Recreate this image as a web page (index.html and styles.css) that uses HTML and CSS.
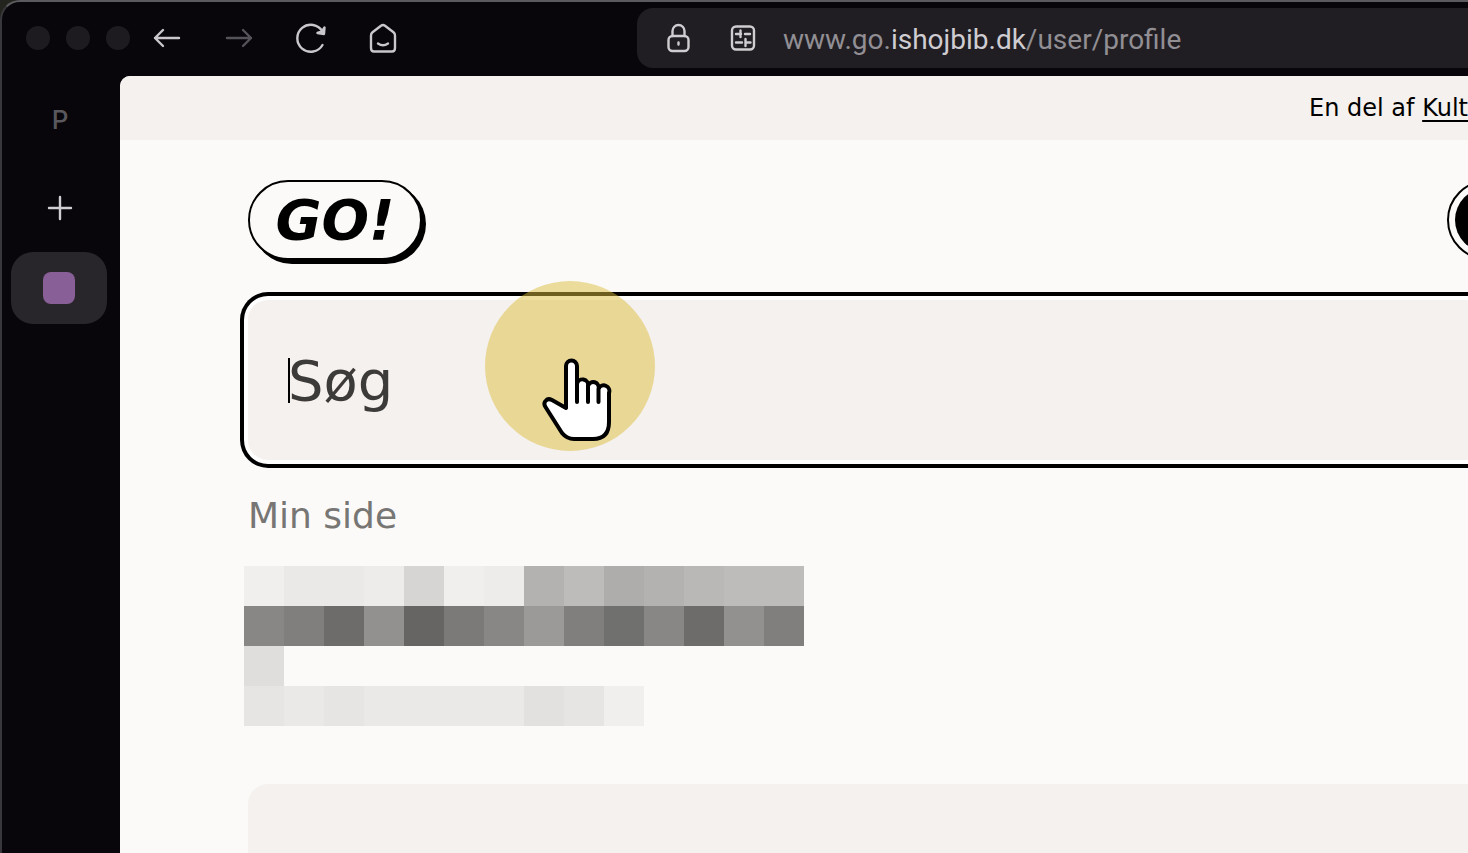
FILE: index.html
```html
<!DOCTYPE html>
<html lang="da">
<head>
<meta charset="utf-8">
<title>Min side</title>
<link rel="stylesheet" href="styles.css">
</head>
<body>
<div class="window">
  <header class="toolbar">
    <div class="lights"><span class="light"></span><span class="light"></span><span class="light"></span></div>
    <nav class="nav" aria-label="Browser">
      <button class="tool" aria-label="Back"><svg width="32" height="32" viewBox="0 0 32 32"><path d="M28 16H4M12 8l-8 8 8 8"/></svg></button>
      <button class="tool dim" aria-label="Forward"><svg width="32" height="32" viewBox="0 0 32 32"><path d="M4 16h24M20 8l8 8-8 8"/></svg></button>
      <button class="tool" aria-label="Reload"><svg width="32" height="32" viewBox="0 0 32 32"><path d="M27.500 23A13.500 13.500 0 1 1 27.500 9.500"/><path fill="currentColor" d="M29.500 5.500L29 12 22.500 11 27 9.500Z"/></svg></button>
      <button class="tool" aria-label="Home"><svg width="32" height="32" viewBox="0 0 32 32"><path d="M4 13.500Q4 11.500 5.500 10.300L14 3.700Q16 2.200 18 3.700L26.500 10.300Q28 11.500 28 13.500V26Q28 29.500 25 29.500H7Q4 29.500 4 26ZM11 21.500Q16 25 21 21.500"/></svg></button>
    </nav>
    <div class="address">
      <svg class="icon" width="32" height="32" viewBox="0 0 32 32"><rect x="5.500" y="14" width="20" height="15" rx="4"/><path d="M9.500 14V9a6 6 0 0 1 12 0v5M15.500 20.500v2"/></svg>
      <svg class="icon" width="32" height="32" viewBox="0 0 32 32"><rect x="5" y="4.500" width="22" height="23" rx="4"/><path d="M9 12h5M13.500 8.500v6.500M18 12h5M9 20.500h6M18.500 17v7M18.500 20.500h5"/></svg>
      <span class="url">www.go.<span class="domain">ishojbib.dk</span>/user/profile</span>
    </div>
  </header>
  <div class="body">
    <aside class="rail">
      <span class="space">P</span>
      <button class="add" aria-label="New tab"><svg width="32" height="32" viewBox="0 0 32 32"><path d="M16 5v22M5 16h22"/></svg></button>
      <button class="tab" aria-label="Current tab"><span class="favicon"></span></button>
    </aside>
    <main class="page">
      <div class="strip"><p class="part">En del af <a class="partner" href="#">Kult</a></p></div>
      <div class="content">
        <div class="masthead">
          <a class="logo" href="#">GO!</a>
          <button class="profile" aria-label="Profil"><span class="disc"></span></button>
        </div>
        <div class="search">
          <input class="field" type="search" placeholder="Søg" aria-label="Søg">
          <span class="caret"></span>
          <span class="halo"></span>
          <svg class="hand" width="72" height="86" viewBox="0 0 72 86"><path d="M25 50V10a5 5 0 0 1 11 0V28a5 5 0 0 1 11 2a5 5 0 0 1 10.500 3a5 5 0 0 1 10.500 4V66Q68 83 52 83H33Q26 83 21 77L4.500 51Q2 47 5 44.500Q7 42 11 44L25 52ZM36 27V46M47 29V46M57.500 33V46"/></svg>
        </div>
        <h1 class="title">Min side</h1>
        <div class="mosaic" aria-hidden="true">
          <i class="s1"></i><i class="s3"></i><i class="s3"></i><i class="s2"></i><i class="s7"></i><i class="s1"></i><i class="s2"></i><i class="s10"></i><i class="s8"></i><i class="s11"></i><i class="s10"></i><i class="s9"></i><i class="s8"></i><i class="s8"></i>
          <i class="s14"></i><i class="s15"></i><i class="s18"></i><i class="s13"></i><i class="s19"></i><i class="s16"></i><i class="s14"></i><i class="s12"></i><i class="s15"></i><i class="s17"></i><i class="s14"></i><i class="s18"></i><i class="s13"></i><i class="s15"></i>
          <i class="s6 lone"></i>
          <i class="s4"></i><i class="s3"></i><i class="s4"></i><i class="s3"></i><i class="s3"></i><i class="s3"></i><i class="s3"></i><i class="s5"></i><i class="s4"></i><i class="s1"></i>
        </div>
        <section class="card"></section>
      </div>
    </main>
  </div>
</div>
</body>
</html>
```
FILE: styles.css
```css
* { box-sizing: border-box; }
html, body { height: 100%; }
body { margin: 0; overflow: hidden; background: #24241e; font-family: "DejaVu Sans", sans-serif; }
button { padding: 0; border: 0; background: none; }
svg { fill: none; stroke-linecap: round; stroke-linejoin: round; }

.window { display: flex; flex-direction: column; height: 100%; border-top: 2px solid #5b5b5f; border-left: 2px solid #38373b; border-top-left-radius: 20px; background: #08050b; overflow: hidden; }
.toolbar { display: flex; align-items: center; height: 74px; flex: none; padding: 0 0 2px 24px; }
.lights { display: flex; gap: 16px; }
.light { width: 24px; height: 24px; border-radius: 50%; background: #1d1b20; }
.nav { display: flex; gap: 40px; margin-left: 21px; }
.tool { width: 32px; height: 32px; color: #c9c7cb; }
.tool svg, .add svg, .icon { display: block; stroke: currentColor; stroke-width: 2.4; }
.dim { color: #55535a; }
.address { display: flex; align-items: center; gap: 32px; flex: 1; height: 60px; margin-left: 238px; padding-left: 26px; border-radius: 16px 0 0 16px; background: #211e23; color: #cfcdd0; white-space: nowrap; }
.icon { flex: none; }
.url { margin-left: -8px; padding-top: 4px; font: 28px/32px Roboto, sans-serif; color: #918f94; }
.domain { color: #cfcdd1; }

.body { display: flex; flex: 1; min-height: 0; }
.rail { display: flex; flex-direction: column; align-items: center; width: 118px; flex: none; padding: 28px 4px 0 0; }
.space { padding-left: 2px; font: 500 26px/32px Inter, sans-serif; color: #5a585d; }
.add { width: 32px; height: 32px; margin: 56px 0 28px 2px; color: #d0ced2; }
.tab { display: grid; place-items: center; width: 96px; height: 72px; border-radius: 22px; background: #29262b; }
.favicon { width: 32px; height: 32px; border-radius: 8px; background: #885f96; }

.page { flex: 1; min-width: 0; overflow: hidden; border-top-left-radius: 10px; background: #fbfaf8; }
.strip { display: flex; justify-content: flex-end; align-items: center; height: 64px; background: #f5f1ee; }
.part { margin: 0; font-size: 24px; line-height: 32px; white-space: nowrap; color: #000; }
.partner { color: inherit; text-decoration: underline; text-decoration-thickness: 2px; text-underline-offset: 4px; }
.content { padding: 40px 0 0 128px; }
.masthead { display: flex; justify-content: space-between; height: 80px; }
.logo { display: grid; place-items: center; width: 174px; height: 80px; border: 2px solid #000; border-radius: 40px; box-shadow: 4px 4px 0 #000; background: #fbfaf8; color: #000; font-size: 56px; font-weight: bold; font-style: italic; line-height: 64px; text-decoration: none; }
.profile { display: grid; place-items: center; flex: none; width: 80px; height: 80px; margin-right: -59px; border: 2px solid #000; border-radius: 50%; }
.disc { width: 64px; height: 64px; border-radius: 50%; background: #000; }
.search { position: relative; margin-top: 40px; }
.field { display: block; width: 100%; height: 160px; padding: 0 0 0 40px; border: 0; border-radius: 20px 0 0 20px; outline: 0; background: #f5f1ee; box-shadow: 0 0 0 4px #fff, 0 0 0 8px #000; font: 56px/64px "DejaVu Sans", sans-serif; color: #000; }
.field::placeholder { color: #3c3b3a; opacity: 1; }
.caret { position: absolute; left: 40px; top: 58px; width: 2px; height: 45px; background: #000; }
.halo { position: absolute; left: 237px; top: -19px; width: 170px; height: 170px; border-radius: 50%; background: rgba(222, 190, 62, .5); }
.hand { position: absolute; left: 293px; top: 56px; fill: #fff; stroke: #000; stroke-width: 4; }
.title { margin: 36px 0 0; font-size: 36px; font-weight: normal; line-height: 40px; color: #777674; }
.mosaic { display: grid; grid-template-columns: repeat(14, 40px); grid-auto-rows: 40px; margin: 30px 0 0 -4px; }
.lone { grid-column: 1 / 2; }
.lone + i { grid-column: 1; }
.s1 { background: #f0efed; }
.s2 { background: #edecea; }
.s3 { background: #eae9e7; }
.s4 { background: #e6e5e3; }
.s5 { background: #e2e1df; }
.s6 { background: #dfdedc; }
.s7 { background: #d6d5d3; }
.s8 { background: #bdbcba; }
.s9 { background: #b9b8b6; }
.s10 { background: #b3b2b0; }
.s11 { background: #aeadab; }
.s12 { background: #9b9a98; }
.s13 { background: #92918f; }
.s14 { background: #888785; }
.s15 { background: #807f7d; }
.s16 { background: #7b7a78; }
.s17 { background: #70716e; }
.s18 { background: #6d6c6a; }
.s19 { background: #666563; }
.card { height: 320px; margin-top: 58px; border-top-left-radius: 20px; background: #f5f1ee; }
```
